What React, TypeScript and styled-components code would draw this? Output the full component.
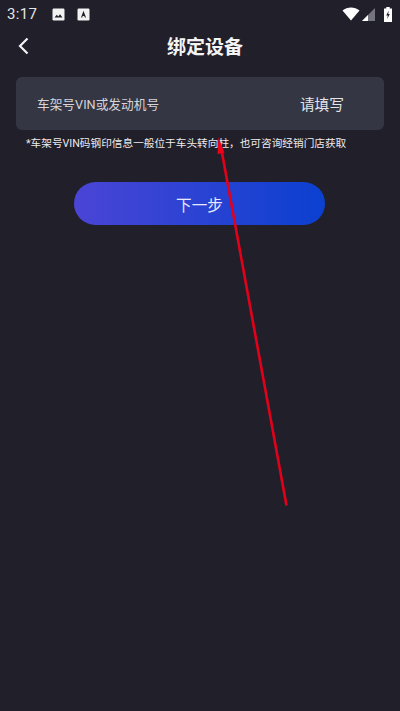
import { createGlobalStyle } from 'styled-components'
import styled from 'styled-components'

const GlobalStyle = createGlobalStyle`
  html, body {
    margin: 0;
    padding: 0;
    background: #201f2a;
  }
  body {
    font-family: Roboto, "Noto Sans CJK SC", sans-serif;
  }
`

const Page = styled.div`
  position: relative;
  display: flex;
  flex-direction: column;
  width: 400px;
  height: 711px;
  overflow: hidden;
  background: #201f2a;
  color: #fff;
`

const StatusBar = styled.div`
  display: flex;
  align-items: center;
  height: 28px;
  padding: 0 8px 0 7px;
`

const Clock = styled.span`
  font-size: 15px;
  color: #e4e4e6;
  letter-spacing: 0.3px;
  margin-right: 15px;
`

const StatusIcon = styled.svg`
  display: block;
  flex: none;
`

const StatusRight = styled.div`
  display: flex;
  align-items: center;
  margin-left: auto;
`

const Header = styled.div`
  display: flex;
  align-items: center;
  justify-content: center;
  position: relative;
  height: 38px;
  padding: 0 0 4px 10px;
  box-sizing: border-box;
`

const BackButton = styled.button`
  position: absolute;
  left: 16px;
  top: 8px;
  padding: 0;
  border: 0;
  background: none;
  display: flex;
`

const Title = styled.h1`
  margin: 0;
  font-size: 19px;
  font-weight: 700;
  color: #f4f4f5;
`

const Field = styled.div`
  display: flex;
  align-items: center;
  justify-content: space-between;
  height: 53px;
  margin: 11px 16px 0;
  padding: 0 40px 0 21px;
  border-radius: 6px;
  background: #353643;
`

const FieldLabel = styled.span`
  font-size: 12.7px;
  color: #d4d4d9;
  margin-top: -1px;
`

const FieldValue = styled.span`
  font-size: 14.7px;
  color: #e4e4e8;
`

const Hint = styled.p`
  margin: 6px 0 0 26px;
  font-size: 10.67px;
  line-height: 16px;
  color: #ecebef;
  white-space: nowrap;
`

const NextButton = styled.button`
  align-self: center;
  width: 251px;
  height: 43px;
  margin: 30px 1px 0 0;
  padding: 0;
  border: 0;
  border-radius: 22px;
  background: linear-gradient(90deg, #4a45d6 0%, #0b40d0 100%);
  color: #e8e9fb;
  font-family: inherit;
  font-size: 15.6px;
`

const Arrow = styled.svg`
  position: absolute;
  left: 0;
  top: 0;
  pointer-events: none;
`

export default function App() {
  return (
    <Page>
      <GlobalStyle />
      <StatusBar>
        <Clock>3:17</Clock>
        <StatusIcon width="13" height="13" viewBox="0 0 13 13" style={{ marginRight: 12 }}>
          <rect x="0.5" y="0.5" width="12" height="12" rx="1.2" fill="#f2f2f3" />
          <path d="M2.5 9.5 L4.8 6.8 L6.3 8.4 L8 6.2 L10.5 9.5 Z" fill="#201f2a" />
        </StatusIcon>
        <StatusIcon width="13" height="13" viewBox="0 0 13 13">
          <rect x="0.5" y="0.5" width="12" height="12" rx="1.2" fill="#f2f2f3" />
          <path d="M4 9.5 L6.5 2.8 L9 9.5 H7.8 L7.3 8 H5.7 L5.2 9.5 Z" fill="#201f2a" />
        </StatusIcon>
        <StatusRight>
          <StatusIcon width="18" height="14" viewBox="0 0 18 14" style={{ marginRight: 2 }}>
            <path d="M0.5 3.6 C5.3 -0.4 12.7 -0.4 17.5 3.6 L9 13.4 Z" fill="#fff" />
          </StatusIcon>
          <StatusIcon width="13" height="13" viewBox="0 0 13 13" style={{ marginRight: 9 }}>
            <path d="M13 0 V13 H0 Z" fill="#74747c" />
            <path d="M6 7 V13 H0 Z" fill="#fff" />
          </StatusIcon>
          <StatusIcon width="8" height="15" viewBox="0 0 8 15">
            <path d="M2.3 0 H5.7 V1.4 H8 V15 H0 V1.4 H2.3 Z" fill="#fff" />
            <path d="M4.8 3.6 L2.2 8.6 H3.8 L3.2 12 L5.8 7 H4.2 Z" fill="#201f2a" />
          </StatusIcon>
        </StatusRight>
      </StatusBar>
      <Header>
        <BackButton type="button" aria-label="返回">
          <svg width="14" height="20" viewBox="0 0 14 20" fill="none">
            <path d="M11.5 2.5 L4 10 L11.5 17.5" stroke="#f2f2f3" strokeWidth="2.2" />
          </svg>
        </BackButton>
        <Title>绑定设备</Title>
      </Header>
      <Field>
        <FieldLabel>车架号VIN或发动机号</FieldLabel>
        <FieldValue>请填写</FieldValue>
      </Field>
      <Hint>*车架号VIN码钢印信息一般位于车头转向柱，也可咨询经销门店获取</Hint>
      <NextButton type="button">下一步</NextButton>
      <Arrow width="400" height="711" viewBox="0 0 400 711">
        <path d="M286.5 505.5 L221.5 150" stroke="#e2001a" strokeWidth="2.6" fill="none" />
        <path d="M218.5 137 L224.5 153 L217.5 154 Z" fill="#ee0018" />
      </Arrow>
    </Page>
  )
}
